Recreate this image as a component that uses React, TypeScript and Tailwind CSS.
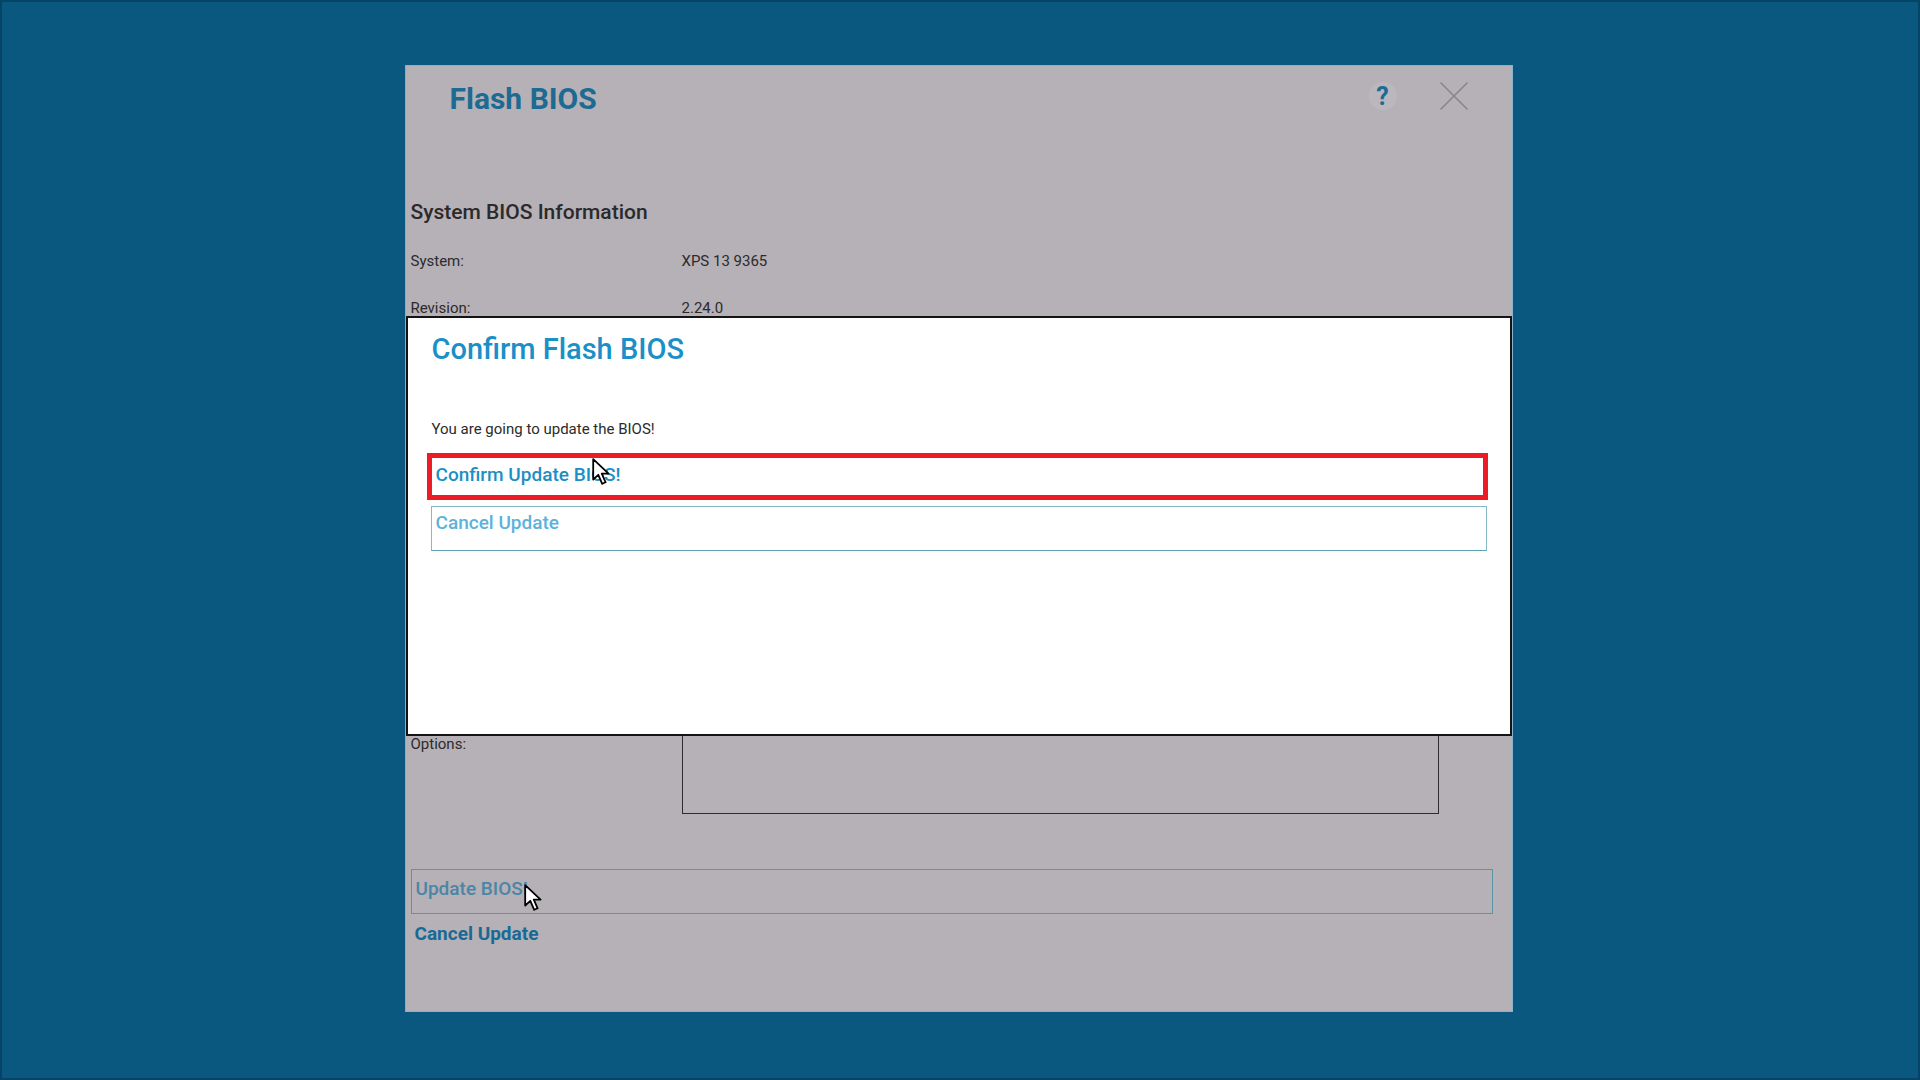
function Cursor({ className }: { className: string }) {
  return (
    <svg className={className} width="18" height="28" viewBox="0 0 18 28">
      <path
        d="M1.2 1.2 L1.2 21.5 L6.3 16.8 L10.2 25.8 L13.6 24.3 L9.8 15.6 L16.6 15.6 Z"
        fill="#ffffff"
        stroke="#000000"
        strokeWidth="1.8"
        strokeLinejoin="round"
      />
    </svg>
  );
}

function CloseGlyph() {
  return (
    <svg width="28" height="28" viewBox="0 0 28 28">
      <path d="M1 1 L27 27 M27 1 L1 27" stroke="#88868b" strokeWidth="1.6" strokeLinecap="round" />
    </svg>
  );
}

function ConfirmModal() {
  return (
    <div className="absolute left-0 right-0 top-[250px] h-[420px] bg-white border-2 border-[#141414] z-10">
      <div className="pt-[13px] pl-[24px] text-[29px] leading-[36px] font-medium text-[#1b8fc7]">
        Confirm Flash BIOS
      </div>
      <p className="mt-[52px] pl-[24px] text-[15px] leading-[20px] text-[#2b2b2b]">
        You are going to update the BIOS!
      </p>
      <div className="mt-[14px] ml-[19px] mr-[22px] h-[47px] border-[5px] border-[#ed1c24] pl-[4px] pt-[5px]">
        <span className="text-[19px] leading-[24px] font-medium text-[#1c8fc4]">Confirm Update BIOS!</span>
      </div>
      <div className="mt-[6px] ml-[23px] mr-[23px] h-[45px] border border-[#86b9c6] border-b-[#5fa6b2] pl-[4px] pt-[4px]">
        <span className="text-[19px] leading-[24px] font-medium text-[#5cb2dc]">Cancel Update</span>
      </div>
    </div>
  );
}

export default function App() {
  return (
    <div
      className="w-screen h-screen flex justify-center pt-[63px] pr-[3px] bg-[#0a5780] border-2 border-[#064466]"
      style={{ fontFamily: "Roboto, 'Liberation Sans', sans-serif" }}
    >
      <div className="relative w-[1108px] h-[947px] bg-[#b6b0b7] border border-[#88b3cc] border-l-[#9fa6b3]">
        <div className="flex items-start justify-between pt-[15px] pl-[44px] pr-[44px]">
          <h1 className="text-[30px] leading-[36px] font-bold text-[#1d6a92]">Flash BIOS</h1>
          <div className="flex items-center gap-[43px] mt-[1px]">
            <div className="w-[28px] h-[28px] rounded-full bg-[#bcb7be] flex items-center justify-center text-[25px] leading-none font-bold text-[#1d6a92]">
              ?
            </div>
            <CloseGlyph />
          </div>
        </div>

        <div className="pl-[5px]">
          <h2 className="mt-[81px] text-[21px] leading-[28px] font-medium text-[#2a2a2a]">System BIOS Information</h2>
          <div className="mt-[25px] flex text-[15px] leading-[20px] text-[#2b2b2b]">
            <span className="w-[271px]">System:</span>
            <span>XPS 13 9365</span>
          </div>
          <div className="mt-[27px] flex text-[15px] leading-[20px] text-[#2b2b2b]">
            <span className="w-[271px]">Revision:</span>
            <span>2.24.0</span>
          </div>

          <div className="mt-[413px] flex">
            <span className="w-[271px] pt-[3px] text-[15px] leading-[20px] text-[#2b2b2b]">Options:</span>
            <div className="w-[757px] h-[83px] border border-[#2e2b2f]" />
          </div>

          <div className="mt-[55px] w-[1082px] h-[45px] border border-[#5c95a8] pl-[4px] pt-[7px]">
            <span className="text-[19px] leading-[24px] font-medium text-[#4a86a5]">Update BIOS!</span>
          </div>
          <div className="mt-[8px] pl-[4px] text-[19px] leading-[24px] font-bold text-[#176a95]">Cancel Update</div>
        </div>

        <ConfirmModal />

        <Cursor className="absolute left-[186px] top-[392px] z-20" />
        <Cursor className="absolute left-[118px] top-[818px] z-20" />
      </div>
    </div>
  );
}
